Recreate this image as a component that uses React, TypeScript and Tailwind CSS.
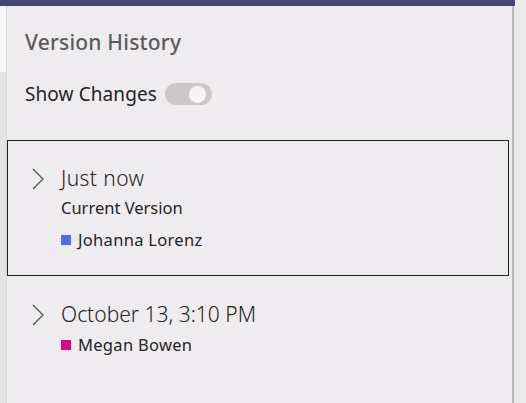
export default function App() {
  return (
    <div
      className="w-[526px] h-[403px] flex flex-col bg-[#ebebeb] overflow-hidden"
      style={{ fontFamily: '"Noto Sans", "Open Sans", sans-serif' }}
    >
      <div className="h-[6px] w-[515px] bg-[#464775]" />
      <div className="flex flex-1">
        <div className="w-[6px] flex flex-col">
          <div className="h-[66px] bg-[#f7f6f7]" />
          <div className="flex-1 bg-[#e4e3e4]" />
        </div>
        <div className="w-[508px] bg-[#efecef] border-l border-[#dcdadc] border-r-2 border-r-[#b9b8b9] flex flex-col">
          <div className="pl-[18px] pt-[22px] text-[21px] leading-[28px] tracking-[0.2px] font-medium text-[#5c5b5c]">Version History</div>
          <div className="flex items-center pl-[18px] mt-[26px] h-[24px]">
            <span className="text-[19px] tracking-[0.1px] text-[#252424]">Show Changes</span>
            <div className="ml-[8px] w-[47px] h-[22px] rounded-full bg-[#cdc8c8] flex items-center justify-end pr-[6px]">
              <div className="w-[17px] h-[17px] rounded-full bg-[#f7f4f7]" />
            </div>
          </div>
          <div className="mt-[34px] mr-[3px] border-[1.5px] border-[#1f1f1f] h-[136px] pt-[25px]">
            <div className="flex items-center h-[26px]">
              <svg width="14" height="22" viewBox="0 0 14 22" className="ml-[23px]" fill="none">
                <path d="M2 1 L12 11 L2 21" stroke="#555" strokeWidth="1.3" />
              </svg>
              <span className="ml-[16px] text-[21px] tracking-[0.4px] font-light text-[#252424]">Just now</span>
            </div>
            <div className="ml-[53px] mt-[4px] text-[16.5px] leading-[24px] text-[#252424]">Current Version</div>
            <div className="ml-[53px] mt-[8px] flex items-center gap-[7px] text-[16.5px] leading-[24px] tracking-[0.3px] text-[#252424]">
              <span className="w-[10px] h-[10px] bg-[#4f6bed]" />
              Johanna Lorenz
            </div>
          </div>
          <div className="pt-[26px]">
            <div className="flex items-center h-[26px]">
              <svg width="14" height="22" viewBox="0 0 14 22" className="ml-[24px]" fill="none">
                <path d="M2 1 L12 11 L2 21" stroke="#555" strokeWidth="1.3" />
              </svg>
              <span className="ml-[16px] text-[21px] font-light text-[#252424]">October 13, 3:10 PM</span>
            </div>
            <div className="ml-[54px] mt-[5px] flex items-center gap-[7px] text-[16.5px] leading-[24px] tracking-[0.3px] text-[#252424]">
              <span className="w-[10px] h-[10px] bg-[#e3008c]" />
              Megan Bowen
            </div>
          </div>
        </div>
        <div className="flex-1 bg-[#ebebeb]" />
      </div>
    </div>
  )
}
